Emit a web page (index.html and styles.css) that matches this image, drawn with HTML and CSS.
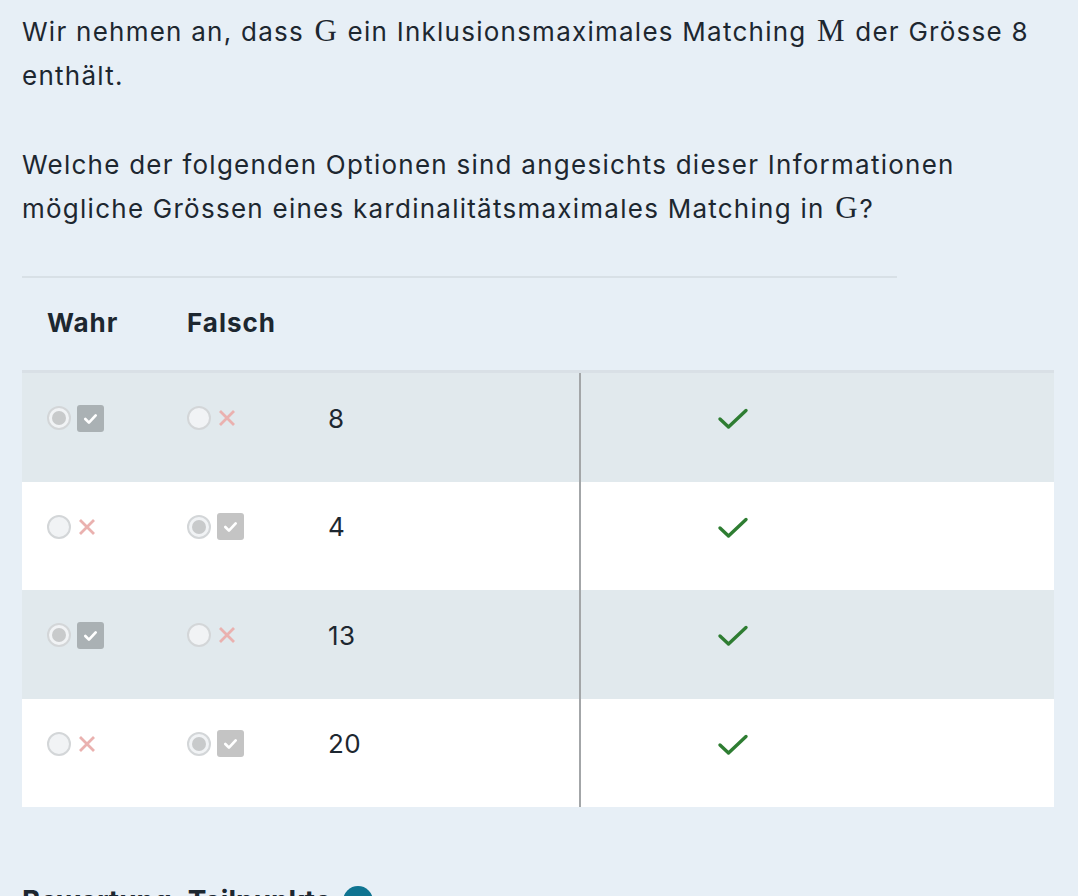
FILE: index.html
```html
<!DOCTYPE html>
<html lang="de">
<head>
<meta charset="utf-8">
<link rel="stylesheet" href="styles.css">
</head>
<body>
<div class="page">
  <p class="q">Wir nehmen an, dass <span class="m">G</span> ein Inklusionsmaximales Matching <span class="m">M</span> der Grösse 8 enthält.</p>
  <p class="q">Welche der folgenden Optionen sind angesichts dieser Informationen mögliche Grössen eines kardinalitätsmaximales Matching in <span class="m">G</span>?</p>

  <div class="table">
    <div class="head">
      <div class="hcell">Wahr</div>
      <div class="hcell">Falsch</div>
    </div>
    <div class="rows">
      <div class="row shaded">
        <div class="cell"><span class="radio on"></span><span class="box"><svg viewBox="0 0 26 26"><path d="M8 13.5l3.5 3.5 6.5-7" /></svg></span></div>
        <div class="cell"><span class="radio"></span><span class="x"><svg viewBox="0 0 20 20"><path d="M3 3l14 14M17 3L3 17"/></svg></span></div>
        <div class="cell val">8</div>
        <div class="cell res"><svg class="ok" viewBox="0 0 32 22"><path d="M3 11l8.5 8L29 2.5"/></svg></div>
      </div>
      <div class="row">
        <div class="cell"><span class="radio"></span><span class="x"><svg viewBox="0 0 20 20"><path d="M3 3l14 14M17 3L3 17"/></svg></span></div>
        <div class="cell"><span class="radio on"></span><span class="box"><svg viewBox="0 0 26 26"><path d="M8 13.5l3.5 3.5 6.5-7" /></svg></span></div>
        <div class="cell val">4</div>
        <div class="cell res"><svg class="ok" viewBox="0 0 32 22"><path d="M3 11l8.5 8L29 2.5"/></svg></div>
      </div>
      <div class="row shaded">
        <div class="cell"><span class="radio on"></span><span class="box"><svg viewBox="0 0 26 26"><path d="M8 13.5l3.5 3.5 6.5-7" /></svg></span></div>
        <div class="cell"><span class="radio"></span><span class="x"><svg viewBox="0 0 20 20"><path d="M3 3l14 14M17 3L3 17"/></svg></span></div>
        <div class="cell val">13</div>
        <div class="cell res"><svg class="ok" viewBox="0 0 32 22"><path d="M3 11l8.5 8L29 2.5"/></svg></div>
      </div>
      <div class="row">
        <div class="cell"><span class="radio"></span><span class="x"><svg viewBox="0 0 20 20"><path d="M3 3l14 14M17 3L3 17"/></svg></span></div>
        <div class="cell"><span class="radio on"></span><span class="box"><svg viewBox="0 0 26 26"><path d="M8 13.5l3.5 3.5 6.5-7" /></svg></span></div>
        <div class="cell val">20</div>
        <div class="cell res"><svg class="ok" viewBox="0 0 32 22"><path d="M3 11l8.5 8L29 2.5"/></svg></div>
      </div>
    </div>
  </div>

  <div class="footer">Bewertung: Teilpunkte <span class="info"></span></div>
</div>
</body>
</html>
```

FILE: styles.css
```css
html, body {
  margin: 0;
  padding: 0;
  background: #e7eff6;
}
body {
  font-family: Inter, "Noto Sans", "Liberation Sans", sans-serif;
  color: #1d2730;
}
.page {
  padding: 10px 24px 0 22px;
}
.q {
  margin: 0 0 45px 0;
  font-size: 26px;
  line-height: 44px;
  letter-spacing: 1.25px;
}
.m {
  font-family: "Liberation Serif", "DejaVu Serif", serif;
  font-size: 31px;
  letter-spacing: 0;
  line-height: 1;
  margin: 0 2px;
}
.table {
  margin-top: 19px;
}
.head {
  width: 875px;
  border-top: 2px solid #d8e0e6;
  display: grid;
  grid-template-columns: 140px 140px;
  height: 92px;
  align-items: center;
}
.hcell {
  font-weight: 700;
  font-size: 26px;
  letter-spacing: 1px;
  padding-left: 25px;
  padding-bottom: 4px;
}
.rows {
  border-top: 3px solid #d9e0e6;
  background: #fff;
}
.row {
  display: grid;
  grid-template-columns: 140px 140px 277px 475px;
  height: 108.5px;
}
.row.shaded {
  background: #e1e9ed;
}
.cell {
  display: flex;
  align-items: center;
  padding-left: 25px;
  height: 90px;
  box-sizing: border-box;
}
.cell.val {
  padding-left: 26px;
  font-size: 26px;
  letter-spacing: 0.5px;
}
.cell.res {
  border-left: 2px solid #a3a6a8;
  height: 100%;
  align-items: flex-start;
  padding-left: 136px;
  padding-top: 35px;
}
.radio {
  width: 20px;
  height: 20px;
  border-radius: 50%;
  border: 2px solid #d3d6d8;
  background: #f1f3f5;
  display: inline-block;
  position: relative;
}
.radio.on::after {
  content: "";
  position: absolute;
  left: 3px;
  top: 3px;
  width: 14px;
  height: 14px;
  border-radius: 50%;
  background: #c8cacb;
}
.box {
  width: 27px;
  height: 27px;
  margin-left: 6px;
  border-radius: 3px;
  background: #c4c4c4;
  display: inline-flex;
}
.shaded .box {
  background: #aab1b4;
}
.box svg {
  width: 27px;
  height: 27px;
  fill: none;
  stroke: #fff;
  stroke-width: 2.6;
  stroke-linecap: round;
  stroke-linejoin: round;
}
.x {
  display: inline-flex;
  margin-left: 6px;
}
.x svg {
  width: 20px;
  height: 20px;
  fill: none;
  stroke: #eab1af;
  stroke-width: 2.8;
}
.ok {
  width: 32px;
  height: 22px;
  fill: none;
  stroke: #2e7d32;
  stroke-width: 3.4;
  stroke-linecap: round;
  stroke-linejoin: round;
}
.footer {
  margin-top: 77px;
  font-size: 28px;
  font-weight: 700;
  display: flex;
  align-items: center;
  gap: 12px;
}
.info {
  width: 30px;
  height: 30px;
  border-radius: 50%;
  background: #0f7491;
  display: inline-block;
}
```
